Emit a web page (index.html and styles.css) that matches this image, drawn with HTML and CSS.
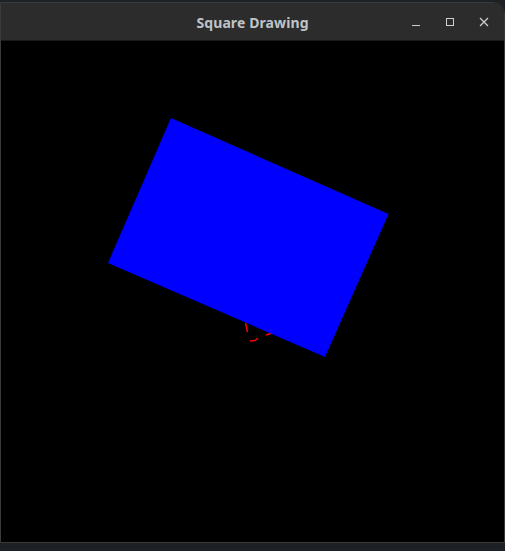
FILE: index.html
```html
<!DOCTYPE html>
<html>
<head>
<meta charset="utf-8">
<title>Square Drawing</title>
<link rel="stylesheet" href="styles.css">
</head>
<body>
<div class="window">
  <div class="titlebar">
    <div class="spacer"></div>
    <div class="title">Square Drawing</div>
    <div class="controls">
      <button class="ctl" aria-label="Minimize">
        <svg width="24" height="24" viewBox="0 0 24 24"><line x1="8" y1="15.5" x2="16" y2="15.5" stroke="#cfcfcf" stroke-width="1"/></svg>
      </button>
      <button class="ctl" aria-label="Maximize">
        <svg width="24" height="24" viewBox="0 0 24 24"><rect x="8.5" y="8.5" width="7" height="7" fill="none" stroke="#cfcfcf" stroke-width="1"/></svg>
      </button>
      <button class="ctl" aria-label="Close">
        <svg width="24" height="24" viewBox="0 0 24 24"><path d="M8 8 L16 16 M16 8 L8 16" stroke="#cfcfcf" stroke-width="1.2"/></svg>
      </button>
    </div>
  </div>
  <div class="canvas">
    <svg width="501" height="501" viewBox="0 0 501 501">
      <g stroke="#ff0000" stroke-width="1.5" fill="none">
        <path d="M244.5 282 L246.5 291"/>
        <path d="M249 300 L254 299.5 L257 297"/>
        <path d="M265 294 L271 292"/>
      </g>
      <polygon points="170,77 387.5,173 324,316 107,222" fill="#0000ff"/>
    </svg>
  </div>
</div>
</body>
</html>
```

FILE: styles.css
```css
html, body {
  margin: 0;
  padding: 0;
  background: #1d2024;
  height: 551px;
  overflow: hidden;
}
.window {
  margin: 2px 0 0 0;
  width: 503px;
  border: 1px solid #3a3a3a;
  border-top-right-radius: 12px;
  background: #000;
  overflow: hidden;
}
.titlebar {
  height: 37px;
  background: #2c2c2c;
  display: grid;
  grid-template-columns: 1fr auto 1fr;
  align-items: center;
  border-bottom: 1px solid #1a1a1a;
}
.title {
  font-family: "Noto Sans", "Open Sans", sans-serif;
  font-weight: 700;
  font-size: 14px;
  color: #bfc3c9;
  letter-spacing: 0.1px;
  padding-top: 2px;
}
.controls {
  display: flex;
  justify-content: flex-end;
  gap: 10px;
  padding-right: 8px;
}
.ctl {
  width: 24px;
  height: 24px;
  padding: 0;
  border: 0;
  background: transparent;
  display: flex;
}
.canvas {
  height: 501px;
  background: #000;
}
.canvas svg {
  display: block;
}
```
